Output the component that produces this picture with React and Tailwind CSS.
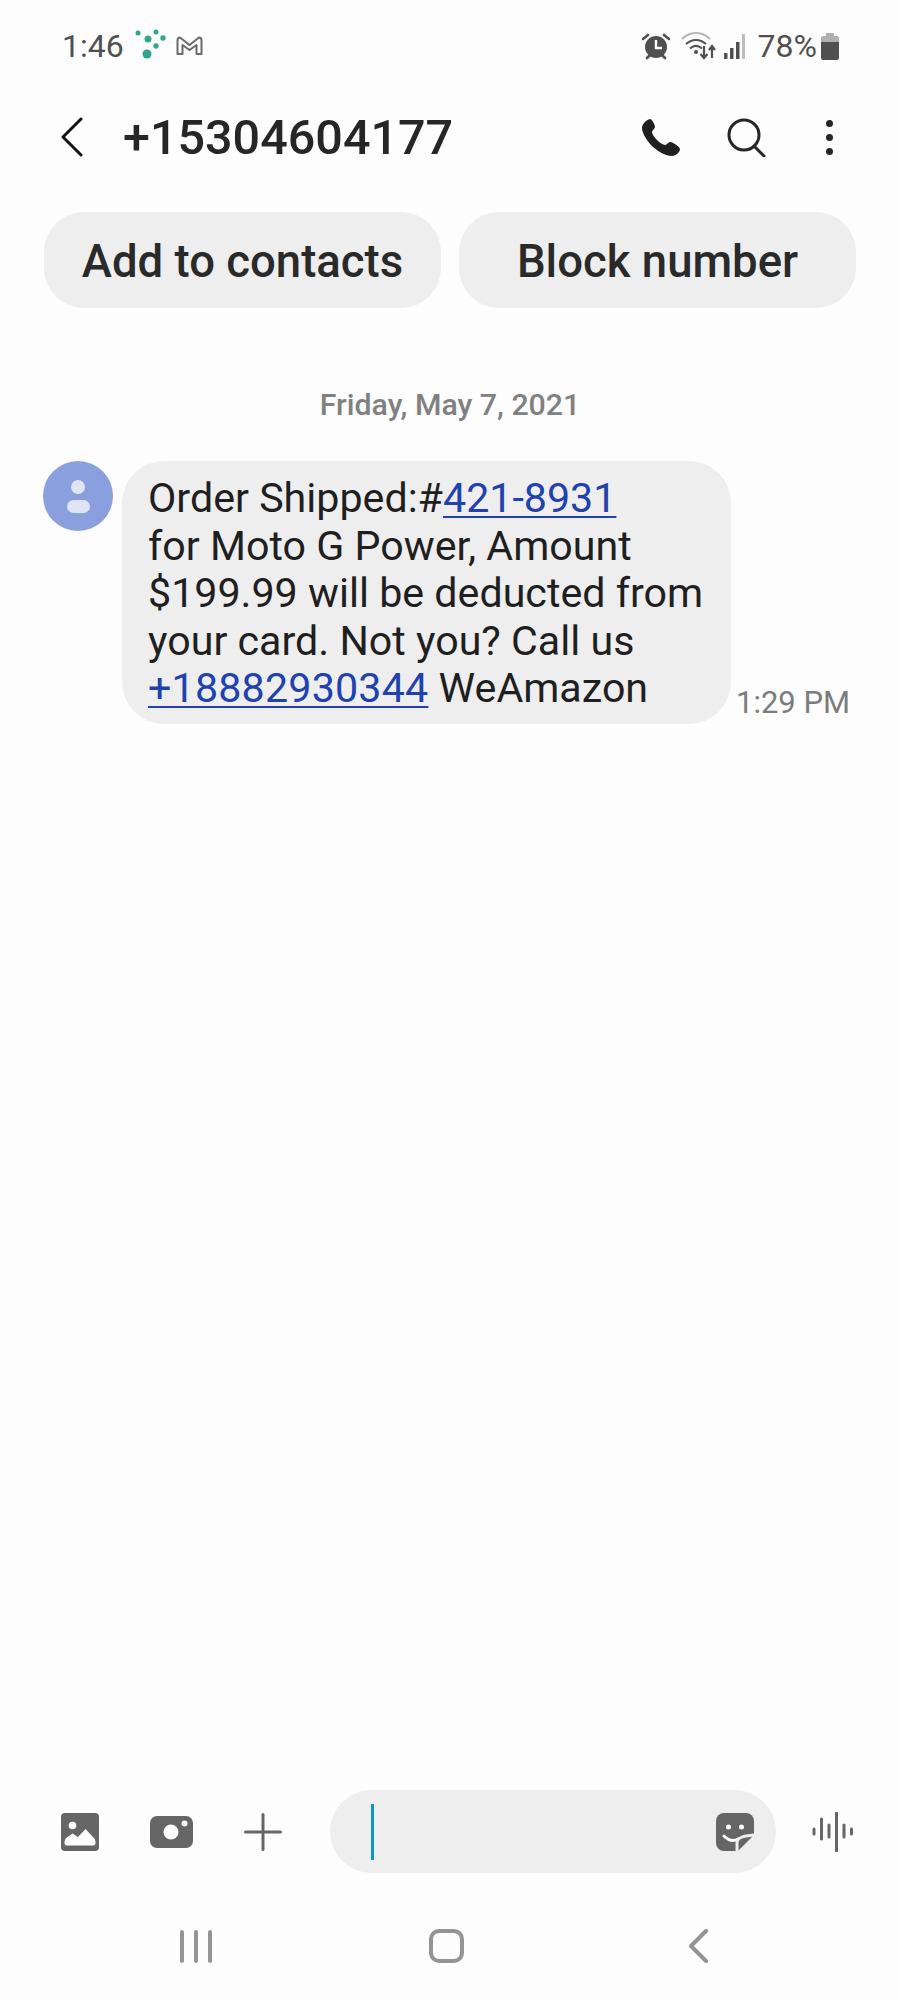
import React from 'react';

const AlarmIcon = () => (
  <svg width="30" height="28" viewBox="0 0 30 28" fill="none">
    <circle cx="15" cy="15" r="11" fill="#505050" />
    <path d="M15 8v8h6" stroke="#fff" strokeWidth="2.4" fill="none" />
    <path d="M2 7l5-4M28 7l-5-4" stroke="#505050" strokeWidth="2.6" strokeLinecap="round" />
    <path d="M6 26l3-3M24 26l-3-3" stroke="#505050" strokeWidth="2.6" strokeLinecap="round" />
  </svg>
);

const WifiIcon = () => (
  <svg width="36" height="28" viewBox="0 0 36 28" fill="none">
    <path d="M1 7C9-1 21-1 29 7" stroke="#b5b5b5" strokeWidth="2" />
    <path d="M5 12c6-5.500 14-5.500 20 0" stroke="#505050" strokeWidth="2" />
    <path d="M9 16.500c4-3.500 8-3.500 12 0" stroke="#505050" strokeWidth="2" />
    <circle cx="15" cy="20" r="2" fill="#505050" />
    <path d="M23 14v12M19.500 22l3.500 4 3.500-4" stroke="#505050" strokeWidth="2.200" />
    <path d="M31 26V14M28 18l3-4 3 4" stroke="#505050" strokeWidth="2.200" />
  </svg>
);

const SignalIcon = () => (
  <svg width="24" height="26" viewBox="0 0 24 26">
    <rect x="0" y="20" width="3.500" height="6" fill="#505050" />
    <rect x="6" y="15" width="3.500" height="11" fill="#505050" />
    <rect x="12" y="9" width="3.500" height="17" fill="#505050" />
    <rect x="18" y="1" width="3" height="25" fill="#bdbdbd" />
  </svg>
);

const BatteryIcon = () => (
  <svg width="18" height="27" viewBox="0 0 18 27">
    <path d="M5 0h8v3h3a2 2 0 0 1 2 2v5H0V5a2 2 0 0 1 2-2h3z" fill="#b0b0b0" />
    <path d="M0 9h18v16a2 2 0 0 1-2 2H2a2 2 0 0 1-2-2z" fill="#505050" />
  </svg>
);

const AppDots = () => (
  <svg width="34" height="32" viewBox="0 0 34 32" fill="#2fa58b">
    <circle cx="4" cy="4" r="2.500" />
    <circle cx="22" cy="3" r="2.500" />
    <circle cx="29" cy="9" r="2.700" />
    <circle cx="14" cy="10" r="3.500" />
    <circle cx="22" cy="17" r="2.700" />
    <circle cx="13" cy="25" r="4.500" />
  </svg>
);

const MailIcon = () => (
  <svg width="27" height="20" viewBox="0 0 27 20" fill="none">
    <path d="M1.500 18V4.500Q1.500 1.500 4 1.500L13.500 9 23 1.500Q25.500 1.500 25.500 4.500V18H20.500V9L13.500 14 6.500 9V18Z" stroke="#6a6a6a" strokeWidth="2" strokeLinejoin="round" />
  </svg>
);

const ImageIcon = () => (
  <svg width="38" height="38" viewBox="0 0 38 38">
    <rect width="38" height="38" rx="4" fill="#666" />
    <circle cx="11.500" cy="12.500" r="3.800" fill="#fff" />
    <path d="M3.500 30c0-3 1-5 3-6l5-3.500 5.500 3.500 7.500-8 7 7.500c2 1.500 3 3 3 6.500 0 1.500-.5 2.500-2 2.500H5.500c-1.500 0-2-1-2-2.500z" fill="#fff" />
  </svg>
);

const CameraIcon = () => (
  <svg width="43" height="32" viewBox="0 0 43 32">
    <rect width="43" height="32" rx="7" fill="#666" />
    <circle cx="21" cy="16" r="7.500" fill="#fff" />
    <circle cx="34.500" cy="7.500" r="3" fill="#fff" />
  </svg>
);

const StickerIcon = () => (
  <svg width="38" height="38" viewBox="0 0 38 38">
    <path d="M8 0h22a8 8 0 0 1 8 8v14L22 38H8a8 8 0 0 1-8-8V8a8 8 0 0 1 8-8z" fill="#666" />
    <circle cx="12.500" cy="14" r="2.500" fill="#fff" />
    <circle cx="25.500" cy="14" r="2.500" fill="#fff" />
    <path d="M8 23c4 4 9 6 14 3" stroke="#fff" strokeWidth="3" fill="none" strokeLinecap="round" />
    <path d="M21 38V30c0-5 5-7 17-8" stroke="#eee" strokeWidth="3" fill="none" />
  </svg>
);

const VoiceIcon = () => (
  <svg width="42" height="40" viewBox="0 0 42 40" stroke="#666" strokeWidth="3" strokeLinecap="round">
    <path d="M2 17v5M9.500 7v20M17 13v12M24.500 1v38M32 13v12M39.500 17v5" />
  </svg>
);

export default function App() {
  return (
    <div className="w-[900px] h-[2000px] flex flex-col bg-[#fdfdfd] overflow-hidden font-['Roboto',sans-serif]">
      {/* status bar */}
      <div className="flex items-center justify-between pl-[62px] pr-[61px] mt-[28px] h-[36px]">
        <div className="flex items-center">
          <span className="text-[32px] leading-none text-[#505050]">1:46</span>
          <span className="ml-[10px] mt-[-2px]"><AppDots /></span>
          <span className="ml-[8px]"><MailIcon /></span>
        </div>
        <div className="flex items-center">
          <AlarmIcon />
          <span className="ml-[10px]"><WifiIcon /></span>
          <span className="ml-[7px]"><SignalIcon /></span>
          <span className="ml-[10px] text-[32px] leading-none text-[#505050]">78%</span>
          <span className="ml-[4px]"><BatteryIcon /></span>
        </div>
      </div>

      {/* header */}
      <div className="flex items-center h-[88px] mt-[29px] pl-[61px] pr-[62px]">
        <svg width="22" height="40" viewBox="0 0 22 40" fill="none" stroke="#111" strokeWidth="3" strokeLinecap="round" strokeLinejoin="round">
          <path d="M20 2L2 20l18 18" />
        </svg>
        <h1 className="ml-[40px] pt-[2px] text-[48.500px] leading-none font-medium text-[#262626]">+15304604177</h1>
        <div className="ml-auto flex items-center">
          <svg width="40" height="39" viewBox="0 0 40 39">
            <path d="M9 1C5 2 1 6 1 10c0 5 5 13 11 19 7 6 14 9 19 9 4 0 8-4 8-7 0-2-7-7-10-7-2 0-3 3-5 3-4 0-13-9-13-13 0-2 3-3 3-5 0-3-4-9-5-8z" fill="#1f1f1f" />
          </svg>
          <svg className="ml-[46px]" width="39" height="39" viewBox="0 0 39 39" fill="none" stroke="#262626" strokeWidth="3" strokeLinecap="round">
            <circle cx="17" cy="17" r="15" />
            <path d="M27 28l10 10" />
          </svg>
          <div className="ml-[60px] mr-[5px] flex flex-col gap-[7px]">
            <div className="w-[7px] h-[7px] rounded-full bg-[#262626]" />
            <div className="w-[7px] h-[7px] rounded-full bg-[#262626]" />
            <div className="w-[7px] h-[7px] rounded-full bg-[#262626]" />
          </div>
        </div>
      </div>

      {/* action buttons */}
      <div className="flex gap-[18px] mt-[31px] pl-[44px] pr-[44px]">
        <button className="w-[397px] h-[96px] pt-[4px] rounded-[40px] bg-[#eeeeee] text-[45.500px] font-medium text-[#2a2a2a] flex items-center justify-center">Add to contacts</button>
        <button className="w-[397px] h-[96px] pt-[4px] rounded-[40px] bg-[#eeeeee] text-[45.500px] font-medium text-[#2a2a2a] flex items-center justify-center">Block number</button>
      </div>

      {/* date */}
      <div className="mt-[80px] h-[34px] text-center text-[30.300px] leading-[34px] font-medium text-[#808080]">Friday, May 7, 2021</div>

      {/* message */}
      <div className="flex items-start mt-[39px] pl-[43px]">
        <div className="w-[70px] h-[70px] rounded-full bg-[#8aa0de] flex flex-col items-center justify-center">
          <div className="w-[14px] h-[14px] rounded-full bg-[#dfe5f6]" />
          <div className="mt-[6px] w-[23px] h-[13px] rounded-full bg-[#dfe5f6]" />
        </div>
        <div className="ml-[9px] w-[609px] h-[263px] rounded-[42px] bg-[#eeeeee] pl-[26px] pt-[14px] text-[41.200px] leading-[47.500px] text-[#1f1f1f]">
          <div>Order Shipped:#<a className="text-[#2041b0] underline decoration-[2px] underline-offset-[4px]">421-8931</a></div>
          <div>for Moto G Power, Amount</div>
          <div>$199.99 will be deducted from</div>
          <div>your card. Not you? Call us</div>
          <div><a className="text-[#2041b0] tracking-[0.2px] underline decoration-[2px] underline-offset-[4px]">+18882930344</a> WeAmazon</div>
        </div>
        <div className="self-end ml-[5px] mb-[4px] text-[31px] leading-[34px] text-[#7c7c7c]">1:29 PM</div>
      </div>

      <div className="flex-1" />

      {/* input row */}
      <div className="flex items-center h-[83px] pl-[61px]">
        <ImageIcon />
        <span className="ml-[51px]"><CameraIcon /></span>
        <svg className="ml-[51px]" width="38" height="38" viewBox="0 0 38 38" stroke="#666" strokeWidth="3" strokeLinecap="round">
          <path d="M19 1.500v35M1.500 19h35" />
        </svg>
        <div className="ml-[48px] w-[446px] h-[83px] rounded-[42px] bg-[#eeeeee] flex items-center pl-[41px] pr-[22px]">
          <div className="w-[3px] h-[56px] bg-[#1295bd]" />
          <span className="ml-auto"><StickerIcon /></span>
        </div>
        <span className="ml-[36px]"><VoiceIcon /></span>
      </div>

      {/* nav bar */}
      <div className="flex items-center h-[36px] mt-[55px] mb-[36px] pl-[180px]">
        <div className="flex gap-[10px]">
          <div className="w-[4px] h-[33px] rounded-full bg-[#949494]" />
          <div className="w-[4px] h-[33px] rounded-full bg-[#949494]" />
          <div className="w-[4px] h-[33px] rounded-full bg-[#949494]" />
        </div>
        <div className="ml-[217px] w-[35px] h-[34px] rounded-[10px] border-[4px] border-[#949494]" />
        <svg className="ml-[224px]" width="21" height="34" viewBox="0 0 21 34" fill="none" stroke="#949494" strokeWidth="4" strokeLinecap="round" strokeLinejoin="round">
          <path d="M18 2L3 17l15 15" />
        </svg>
      </div>
    </div>
  );
}
